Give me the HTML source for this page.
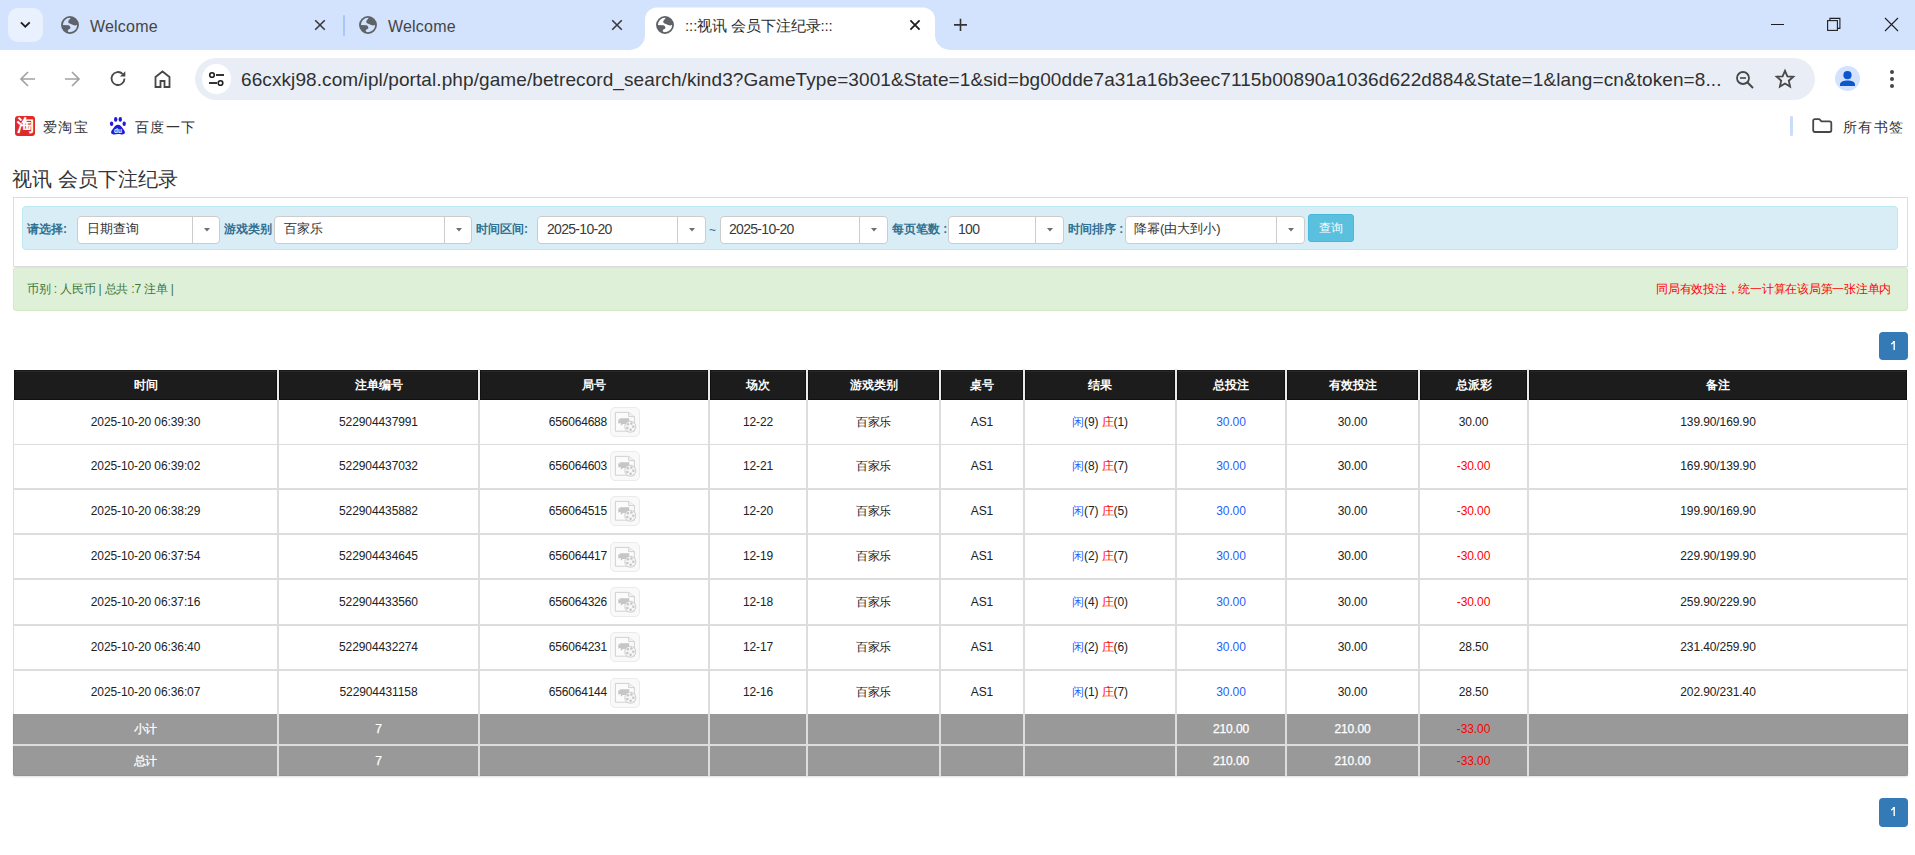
<!DOCTYPE html><html><head><meta charset="utf-8"><style>

*{box-sizing:border-box;margin:0;padding:0}
html,body{width:1915px;height:855px;overflow:hidden;background:#fff;font-family:"Liberation Sans",sans-serif;position:relative}
.abs{position:absolute}
.t{position:absolute;white-space:nowrap;line-height:1}
svg{position:absolute;overflow:visible}

</style></head><body>
<div class="abs" style="left:0;top:0;width:1915px;height:50px;background:#d3e3fd"></div>
<div class="abs" style="left:8px;top:8px;width:35px;height:34px;border-radius:10px;background:#eaf1fe"></div>
<svg style="left:19px;top:19px" width="12" height="12" viewBox="0 0 12 12"><path d="M1.9 3.3 L6.3 7.7 L10.7 3.3" fill="none" stroke="#1f1f1f" stroke-width="1.9"/></svg>
<svg style="left:61px;top:16px" width="18" height="18" viewBox="0 0 18 18"><circle cx="9" cy="9" r="8.05" fill="none" stroke="#5f6368" stroke-width="1.8"/><path d="M9.7 1.0 A8 8 0 0 1 17 9 L16.3 8.8 C15 9.6 13.5 9.7 12.2 9.1 C11 8.3 10 7.7 8.6 7.4 C7.2 7.1 6.9 5.6 7.6 4.5 C8.3 3.4 9.9 2.6 9.7 1.0 Z" fill="#5f6368"/><path d="M1 9 L7.25 9.3 C8.6 9.5 9.4 10.6 9.4 12 C9.3 12.9 8 13.1 7.2 13.7 C6.5 14.3 6.7 15.6 7.5 16.9 A8 8 0 0 1 1 9 Z" fill="#5f6368"/></svg>
<div class="t" style="left:90px;top:19px;font-size:16px;letter-spacing:0.2px;color:#454545">Welcome</div>
<svg style="left:312px;top:17px" width="16" height="16" viewBox="0 0 16 16"><path d="M3.2 3.2 L12.8 12.8 M12.8 3.2 L3.2 12.8" stroke="#3a3a3a" stroke-width="1.6"/></svg>
<div class="abs" style="left:342.5px;top:15px;width:2.6px;height:21px;background:#a8c7fa;border-radius:1.3px"></div>
<svg style="left:359px;top:16px" width="18" height="18" viewBox="0 0 18 18"><circle cx="9" cy="9" r="8.05" fill="none" stroke="#5f6368" stroke-width="1.8"/><path d="M9.7 1.0 A8 8 0 0 1 17 9 L16.3 8.8 C15 9.6 13.5 9.7 12.2 9.1 C11 8.3 10 7.7 8.6 7.4 C7.2 7.1 6.9 5.6 7.6 4.5 C8.3 3.4 9.9 2.6 9.7 1.0 Z" fill="#5f6368"/><path d="M1 9 L7.25 9.3 C8.6 9.5 9.4 10.6 9.4 12 C9.3 12.9 8 13.1 7.2 13.7 C6.5 14.3 6.7 15.6 7.5 16.9 A8 8 0 0 1 1 9 Z" fill="#5f6368"/></svg>
<div class="t" style="left:388px;top:19px;font-size:16px;letter-spacing:0.2px;color:#454545">Welcome</div>
<svg style="left:609px;top:17px" width="16" height="16" viewBox="0 0 16 16"><path d="M3.2 3.2 L12.8 12.8 M12.8 3.2 L3.2 12.8" stroke="#3a3a3a" stroke-width="1.6"/></svg>
<svg style="left:0;top:0" width="1915" height="50" viewBox="0 0 1915 50"><path d="M630 50 A15 15 0 0 0 645 35 V19.5 A12 12 0 0 1 657 7.5 H923 A12 12 0 0 1 935 19.5 V35 A15 15 0 0 0 950 50 Z" fill="#fff"/></svg>
<svg style="left:656px;top:16px" width="18" height="18" viewBox="0 0 18 18"><circle cx="9" cy="9" r="8.05" fill="none" stroke="#5f6368" stroke-width="1.8"/><path d="M9.7 1.0 A8 8 0 0 1 17 9 L16.3 8.8 C15 9.6 13.5 9.7 12.2 9.1 C11 8.3 10 7.7 8.6 7.4 C7.2 7.1 6.9 5.6 7.6 4.5 C8.3 3.4 9.9 2.6 9.7 1.0 Z" fill="#5f6368"/><path d="M1 9 L7.25 9.3 C8.6 9.5 9.4 10.6 9.4 12 C9.3 12.9 8 13.1 7.2 13.7 C6.5 14.3 6.7 15.6 7.5 16.9 A8 8 0 0 1 1 9 Z" fill="#5f6368"/></svg>
<div class="t" style="left:685px;top:18px;font-size:15px;letter-spacing:-0.1px;color:#2b2b2b">:::视讯 会员下注纪录:::</div>
<svg style="left:907px;top:17px" width="16" height="16" viewBox="0 0 16 16"><path d="M3.4000000000000004 3.4000000000000004 L12.6 12.6 M12.6 3.4000000000000004 L3.4000000000000004 12.6" stroke="#1f1f1f" stroke-width="1.8"/></svg>
<svg style="left:952px;top:17px" width="16" height="16" viewBox="0 0 16 16"><path d="M8.5 1.8 V14 M2 7.9 H15" stroke="#333" stroke-width="1.6"/></svg>
<div class="abs" style="left:1771px;top:24px;width:13px;height:1px;background:#1f1f1f"></div>
<svg style="left:1826px;top:16px" width="16" height="16" viewBox="0 0 16 16"><rect x="1.6" y="4.6" width="9.8" height="9.8" fill="none" stroke="#1f1f1f" stroke-width="1.1"/><path d="M3.9 4.6 V2.4 H13.9 V12.4 H11.4" fill="none" stroke="#1f1f1f" stroke-width="1.1"/></svg>
<svg style="left:1884px;top:17px" width="15" height="15" viewBox="0 0 15 15"><path d="M1 1 L14 14 M14 1 L1 14" stroke="#1f1f1f" stroke-width="1.1"/></svg>
<div class="abs" style="left:0;top:50px;width:1915px;height:50px;background:#fff"></div>
<svg style="left:20px;top:71px" width="16" height="16" viewBox="0 0 16 16"><path d="M15 8 H1.5 M8 1 L1 8 L8 15" fill="none" stroke="#a3a3a3" stroke-width="1.7"/></svg>
<svg style="left:64px;top:71px" width="16" height="16" viewBox="0 0 16 16"><path d="M1 8 H14.5 M8 1 L15 8 L8 15" fill="none" stroke="#a3a3a3" stroke-width="1.7"/></svg>
<svg style="left:110px;top:70px" width="17" height="17" viewBox="0 0 17 17"><path d="M14.5 8.5 A6.5 6.5 0 1 1 12.6 3.9" fill="none" stroke="#474747" stroke-width="1.8"/><path d="M15.3 1.2 V6.5 H10 Z" fill="#474747"/></svg>
<svg style="left:154px;top:70px" width="17" height="18" viewBox="0 0 17 18"><path d="M1.5 17 V7 L8.5 1.5 L15.5 7 V17 H10.5 V11 H6.5 V17 Z" fill="none" stroke="#474747" stroke-width="1.8" stroke-linejoin="miter"/></svg>
<div class="abs" style="left:195px;top:58px;width:1620px;height:42px;border-radius:21px;background:#e9eef6"></div>
<div class="abs" style="left:202px;top:64px;width:29px;height:30px;border-radius:15px;background:#fff"></div>
<svg style="left:208px;top:71px" width="17" height="16" viewBox="0 0 17 16"><circle cx="4" cy="4" r="2.3" fill="none" stroke="#1f1f1f" stroke-width="1.6"/><path d="M8 4 H16" stroke="#1f1f1f" stroke-width="1.8"/><circle cx="12.5" cy="12" r="2.3" fill="none" stroke="#1f1f1f" stroke-width="1.6"/><path d="M1 12 H9" stroke="#1f1f1f" stroke-width="1.8"/></svg>
<div class="t" style="left:241px;top:70px;font-size:19px;letter-spacing:0.09px;color:#303030">66cxkj98.com/ipl/portal.php/game/betrecord_search/kind3?GameType=3001&amp;State=1&amp;sid=bg00dde7a31a16b3eec7115b00890a1036d622d884&amp;State=1&amp;lang=cn&amp;token=8...</div>
<svg style="left:1735px;top:70px" width="20" height="20" viewBox="0 0 20 20"><circle cx="8" cy="8" r="6" fill="none" stroke="#474747" stroke-width="1.8"/><path d="M5 8 H11" stroke="#474747" stroke-width="1.6"/><path d="M12.3 12.3 L18 18" stroke="#474747" stroke-width="2"/></svg>
<svg style="left:1775px;top:69px" width="20" height="20" viewBox="0 0 20 20"><path d="M10 1.8 L12.4 7.3 L18.3 7.8 L13.8 11.7 L15.1 17.6 L10 14.5 L4.9 17.6 L6.2 11.7 L1.7 7.8 L7.6 7.3 Z" fill="none" stroke="#474747" stroke-width="1.8" stroke-linejoin="miter"/></svg>
<div class="abs" style="left:1835px;top:66px;width:25px;height:25px;border-radius:50%;background:#d3e3fd"></div>
<svg style="left:1838px;top:69px" width="19" height="19" viewBox="0 0 19 19"><circle cx="9.5" cy="6.2" r="4.1" fill="#0b57d0"/><path d="M2 17 V15.3 C2 12.6 5.5 11.4 9.5 11.4 C13.5 11.4 17 12.6 17 15.3 V17 Z" fill="#0b57d0"/></svg>
<div class="abs" style="left:1890px;top:70px;width:4px;height:4px;border-radius:50%;background:#474747"></div>
<div class="abs" style="left:1890px;top:77px;width:4px;height:4px;border-radius:50%;background:#474747"></div>
<div class="abs" style="left:1890px;top:84px;width:4px;height:4px;border-radius:50%;background:#474747"></div>
<div class="abs" style="left:15px;top:116px;width:20px;height:20px;border-radius:3px;background:#e02a2a"></div>
<div class="t" style="left:16px;top:117px;font-size:17px;color:#fff;font-weight:bold;width:18px;text-align:center;line-height:18px">淘</div>
<div class="t" style="left:43px;top:120px;font-size:14px;letter-spacing:1.4px;color:#333">爱淘宝</div>
<svg style="left:109px;top:116px" width="18" height="20" viewBox="0 0 18 20"><ellipse cx="2.6" cy="7.8" rx="1.7" ry="2.2" fill="#2319dc"/><ellipse cx="15.2" cy="7.8" rx="1.7" ry="2.2" fill="#2319dc"/><ellipse cx="6.7" cy="3.4" rx="1.7" ry="2.3" fill="#2319dc"/><ellipse cx="11.3" cy="3.4" rx="1.7" ry="2.3" fill="#2319dc"/><path d="M9 8.8 C6.5 8.8 5.5 11 4 12.8 C2.5 14.5 1.9 15.5 2.2 17 C2.6 18.3 4 18.6 5.5 18.4 C7 18.2 8 17.9 9 17.9 C10 17.9 11 18.2 12.5 18.4 C14 18.6 15.4 18.3 15.8 17 C16.1 15.5 15.5 14.5 14 12.8 C12.5 11 11.5 8.8 9 8.8Z" fill="#2319dc"/><text x="9" y="17" font-size="6.5" fill="#fff" text-anchor="middle" font-family="Liberation Sans" font-weight="bold">du</text></svg>
<div class="t" style="left:135px;top:120px;font-size:14px;letter-spacing:1.4px;color:#333">百度一下</div>
<div class="abs" style="left:1790.2px;top:116px;width:2.6px;height:19.5px;border-radius:1.3px;background:#cadcfb"></div>
<svg style="left:1811px;top:117px" width="22" height="17" viewBox="0 0 22 17"><path d="M3.9 2.1 H8.3 L10.5 4.4 H18.6 Q20.3 4.4 20.3 6.1 V13.3 Q20.3 15 18.6 15 H3.9 Q2.2 15 2.2 13.3 V3.8 Q2.2 2.1 3.9 2.1 Z" fill="none" stroke="#474747" stroke-width="1.8" stroke-linejoin="round"/></svg>
<div class="t" style="left:1843px;top:120px;font-size:14px;letter-spacing:1.3px;color:#333">所有书签</div>
<div class="t" style="left:12px;top:169px;font-size:20px;color:#333">视讯 会员下注纪录</div>
<div class="abs" style="left:13px;top:197px;width:1895px;height:70px;border:1px solid #ddd;background:#fff"></div>
<div class="abs" style="left:22px;top:206px;width:1876px;height:44px;border:1px solid #bce8f1;border-radius:4px;background:#d9edf7"></div>
<div class="t" style="left:27px;top:223px;font-size:12px;font-weight:bold;color:#31708f">请选择:</div>
<div class="abs" style="left:77px;top:216px;width:143px;height:28px;border:1px solid #ccc;border-radius:4px;background:#fff"></div>
<div class="abs" style="left:192px;top:217px;width:1px;height:26px;background:#ccc"></div>
<svg style="left:203.5px;top:228px" width="6" height="4" viewBox="0 0 6 4"><path d="M0 0 H6 L3 3.6Z" fill="#6f6f6f"/></svg>
<div class="t" style="left:87px;top:222px;font-size:13px;color:#333">日期查询</div>
<div class="t" style="left:224px;top:223px;font-size:12px;font-weight:bold;color:#31708f">游戏类别</div>
<div class="abs" style="left:274px;top:216px;width:198px;height:28px;border:1px solid #ccc;border-radius:4px;background:#fff"></div>
<div class="abs" style="left:444px;top:217px;width:1px;height:26px;background:#ccc"></div>
<svg style="left:455.5px;top:228px" width="6" height="4" viewBox="0 0 6 4"><path d="M0 0 H6 L3 3.6Z" fill="#6f6f6f"/></svg>
<div class="t" style="left:284px;top:222px;font-size:13px;color:#333">百家乐</div>
<div class="t" style="left:476px;top:223px;font-size:12px;font-weight:bold;color:#31708f">时间区间:</div>
<div class="abs" style="left:537px;top:216px;width:169px;height:28px;border:1px solid #ccc;border-radius:4px;background:#fff"></div>
<div class="abs" style="left:677px;top:217px;width:1px;height:26px;background:#ccc"></div>
<svg style="left:689.0px;top:228px" width="6" height="4" viewBox="0 0 6 4"><path d="M0 0 H6 L3 3.6Z" fill="#6f6f6f"/></svg>
<div class="t" style="left:547px;top:222px;font-size:14px;letter-spacing:-0.7px;color:#3a3a3a">2025-10-20</div>
<div class="t" style="left:709px;top:224px;font-size:12px;color:#31708f">~</div>
<div class="abs" style="left:720px;top:216px;width:168px;height:28px;border:1px solid #ccc;border-radius:4px;background:#fff"></div>
<div class="abs" style="left:859px;top:217px;width:1px;height:26px;background:#ccc"></div>
<svg style="left:871.0px;top:228px" width="6" height="4" viewBox="0 0 6 4"><path d="M0 0 H6 L3 3.6Z" fill="#6f6f6f"/></svg>
<div class="t" style="left:729px;top:222px;font-size:14px;letter-spacing:-0.7px;color:#3a3a3a">2025-10-20</div>
<div class="t" style="left:892px;top:223px;font-size:12px;font-weight:bold;color:#31708f">每页笔数 :</div>
<div class="abs" style="left:948px;top:216px;width:116px;height:28px;border:1px solid #ccc;border-radius:4px;background:#fff"></div>
<div class="abs" style="left:1035px;top:217px;width:1px;height:26px;background:#ccc"></div>
<svg style="left:1047.0px;top:228px" width="6" height="4" viewBox="0 0 6 4"><path d="M0 0 H6 L3 3.6Z" fill="#6f6f6f"/></svg>
<div class="t" style="left:958px;top:222px;font-size:14px;letter-spacing:-0.7px;color:#3a3a3a">100</div>
<div class="t" style="left:1068px;top:223px;font-size:12px;font-weight:bold;color:#31708f">时间排序 :</div>
<div class="abs" style="left:1125px;top:216px;width:180px;height:28px;border:1px solid #ccc;border-radius:4px;background:#fff"></div>
<div class="abs" style="left:1276px;top:217px;width:1px;height:26px;background:#ccc"></div>
<svg style="left:1288.0px;top:228px" width="6" height="4" viewBox="0 0 6 4"><path d="M0 0 H6 L3 3.6Z" fill="#6f6f6f"/></svg>
<div class="t" style="left:1134px;top:222px;font-size:13px;color:#333">降幂(由大到小)</div>
<div class="abs" style="left:1308px;top:214px;width:46px;height:28px;border-radius:3px;background:#5bc0de;border:1px solid #46b8da"></div>
<div class="t" style="left:1319px;top:222px;font-size:12px;color:#fff">查询</div>
<div class="abs" style="left:13px;top:267px;width:1895px;height:44px;border:1px solid #d6e9c6;border-radius:3px;background:#dff0d8"></div>
<div class="t" style="left:27px;top:283px;font-size:12px;letter-spacing:-0.2px;color:#3c763d">币别 : 人民币 | 总共 :7 注单 |</div>
<div class="t" style="right:24px;top:283px;font-size:12px;letter-spacing:-0.26px;color:#f00">同局有效投注，统一计算在该局第一张注单内</div>
<div class="abs" style="left:1879px;top:332px;width:29px;height:28px;border-radius:4px;background:#337ab7"></div>
<svg style="left:1886px;top:338px" width="15" height="15" viewBox="0 0 15 15"><path d="M5.2 6 Q7 5.3 7.6 3.7 H8.2 V12" fill="none" stroke="#fff" stroke-width="1.4"/></svg>
<div class="abs" style="left:1879px;top:798px;width:29px;height:29px;border-radius:4px;background:#337ab7"></div>
<svg style="left:1886px;top:804px" width="15" height="15" viewBox="0 0 15 15"><path d="M5.2 6 Q7 5.3 7.6 3.7 H8.2 V12" fill="none" stroke="#fff" stroke-width="1.4"/></svg>
<div class="abs" style="left:14px;top:370px;width:1893px;height:30px;background:#1c1c1c"></div>
<div class="abs" style="left:14px;top:370px;width:1893px;height:1px;background:#1a1a1a"></div>
<div class="abs" style="left:14px;top:371px;width:1893px;height:1px;background:#282828"></div>
<div class="abs" style="left:14px;top:370px;width:1px;height:30px;background:#111"></div>
<div class="abs" style="left:1906px;top:370px;width:1px;height:30px;background:#111"></div>
<div class="abs" style="left:14px;top:399px;width:1893px;height:1px;background:#111"></div>
<div class="t" style="left:14px;top:379px;width:263px;text-align:center;font-size:12px;font-weight:bold;color:#fff">时间</div>
<div class="t" style="left:279px;top:379px;width:199px;text-align:center;font-size:12px;font-weight:bold;color:#fff">注单编号</div>
<div class="t" style="left:480px;top:379px;width:228px;text-align:center;font-size:12px;font-weight:bold;color:#fff">局号</div>
<div class="t" style="left:710px;top:379px;width:96px;text-align:center;font-size:12px;font-weight:bold;color:#fff">场次</div>
<div class="t" style="left:808px;top:379px;width:131px;text-align:center;font-size:12px;font-weight:bold;color:#fff">游戏类别</div>
<div class="t" style="left:941px;top:379px;width:82px;text-align:center;font-size:12px;font-weight:bold;color:#fff">桌号</div>
<div class="t" style="left:1025px;top:379px;width:150px;text-align:center;font-size:12px;font-weight:bold;color:#fff">结果</div>
<div class="t" style="left:1177px;top:379px;width:108px;text-align:center;font-size:12px;font-weight:bold;color:#fff">总投注</div>
<div class="t" style="left:1287px;top:379px;width:131px;text-align:center;font-size:12px;font-weight:bold;color:#fff">有效投注</div>
<div class="t" style="left:1420px;top:379px;width:107px;text-align:center;font-size:12px;font-weight:bold;color:#fff">总派彩</div>
<div class="t" style="left:1529px;top:379px;width:378px;text-align:center;font-size:12px;font-weight:bold;color:#fff">备注</div>
<div class="abs" style="left:13px;top:400px;width:1px;height:314px;background:#ddd"></div>
<div class="abs" style="left:1907px;top:400px;width:1px;height:314px;background:#ddd"></div>
<div class="abs" style="left:14px;top:444px;width:1893px;height:1px;background:#ddd"></div>
<div class="abs" style="left:14px;top:488px;width:1893px;height:2px;background:#ddd"></div>
<div class="abs" style="left:14px;top:533px;width:1893px;height:2px;background:#ddd"></div>
<div class="abs" style="left:14px;top:578px;width:1893px;height:2px;background:#ddd"></div>
<div class="abs" style="left:14px;top:624px;width:1893px;height:2px;background:#ddd"></div>
<div class="abs" style="left:14px;top:669px;width:1893px;height:2px;background:#ddd"></div>
<div class="abs" style="left:277px;top:400px;width:2px;height:376px;background:#ddd"></div>
<div class="abs" style="left:277px;top:369px;width:2px;height:31px;background:#ebebeb"></div>
<div class="abs" style="left:276px;top:370px;width:1px;height:30px;background:#111"></div>
<div class="abs" style="left:279px;top:370px;width:1px;height:30px;background:#111"></div>
<div class="abs" style="left:478px;top:400px;width:2px;height:376px;background:#ddd"></div>
<div class="abs" style="left:478px;top:369px;width:2px;height:31px;background:#ebebeb"></div>
<div class="abs" style="left:477px;top:370px;width:1px;height:30px;background:#111"></div>
<div class="abs" style="left:480px;top:370px;width:1px;height:30px;background:#111"></div>
<div class="abs" style="left:708px;top:400px;width:2px;height:376px;background:#ddd"></div>
<div class="abs" style="left:708px;top:369px;width:2px;height:31px;background:#ebebeb"></div>
<div class="abs" style="left:707px;top:370px;width:1px;height:30px;background:#111"></div>
<div class="abs" style="left:710px;top:370px;width:1px;height:30px;background:#111"></div>
<div class="abs" style="left:806px;top:400px;width:2px;height:376px;background:#ddd"></div>
<div class="abs" style="left:806px;top:369px;width:2px;height:31px;background:#ebebeb"></div>
<div class="abs" style="left:805px;top:370px;width:1px;height:30px;background:#111"></div>
<div class="abs" style="left:808px;top:370px;width:1px;height:30px;background:#111"></div>
<div class="abs" style="left:939px;top:400px;width:2px;height:376px;background:#ddd"></div>
<div class="abs" style="left:939px;top:369px;width:2px;height:31px;background:#ebebeb"></div>
<div class="abs" style="left:938px;top:370px;width:1px;height:30px;background:#111"></div>
<div class="abs" style="left:941px;top:370px;width:1px;height:30px;background:#111"></div>
<div class="abs" style="left:1023px;top:400px;width:2px;height:376px;background:#ddd"></div>
<div class="abs" style="left:1023px;top:369px;width:2px;height:31px;background:#ebebeb"></div>
<div class="abs" style="left:1022px;top:370px;width:1px;height:30px;background:#111"></div>
<div class="abs" style="left:1025px;top:370px;width:1px;height:30px;background:#111"></div>
<div class="abs" style="left:1175px;top:400px;width:2px;height:376px;background:#ddd"></div>
<div class="abs" style="left:1175px;top:369px;width:2px;height:31px;background:#ebebeb"></div>
<div class="abs" style="left:1174px;top:370px;width:1px;height:30px;background:#111"></div>
<div class="abs" style="left:1177px;top:370px;width:1px;height:30px;background:#111"></div>
<div class="abs" style="left:1285px;top:400px;width:2px;height:376px;background:#ddd"></div>
<div class="abs" style="left:1285px;top:369px;width:2px;height:31px;background:#ebebeb"></div>
<div class="abs" style="left:1284px;top:370px;width:1px;height:30px;background:#111"></div>
<div class="abs" style="left:1287px;top:370px;width:1px;height:30px;background:#111"></div>
<div class="abs" style="left:1418px;top:400px;width:2px;height:376px;background:#ddd"></div>
<div class="abs" style="left:1418px;top:369px;width:2px;height:31px;background:#ebebeb"></div>
<div class="abs" style="left:1417px;top:370px;width:1px;height:30px;background:#111"></div>
<div class="abs" style="left:1420px;top:370px;width:1px;height:30px;background:#111"></div>
<div class="abs" style="left:1527px;top:400px;width:2px;height:376px;background:#ddd"></div>
<div class="abs" style="left:1527px;top:369px;width:2px;height:31px;background:#ebebeb"></div>
<div class="abs" style="left:1526px;top:370px;width:1px;height:30px;background:#111"></div>
<div class="abs" style="left:1529px;top:370px;width:1px;height:30px;background:#111"></div>
<div class="t" style="left:14px;top:416px;width:263px;text-align:center;font-size:12px;letter-spacing:-0.1px;color:#222">2025-10-20 06:39:30</div>
<div class="t" style="left:279px;top:416px;width:199px;text-align:center;font-size:12px;letter-spacing:-0.1px;color:#222">522904437991</div>
<div class="t" style="left:480px;top:416px;width:128px;text-align:left;padding-left:68.79999999999995px;font-size:12px;color:#222;letter-spacing:-0.2px">656064688</div>
<svg style="left:610px;top:407px" width="30" height="30" viewBox="0 0 30 30"><rect x="0.5" y="0.5" width="29" height="29" rx="4.5" fill="#f9f9f9" stroke="#ebebeb"/><path d="M5.4 5.4 H18.7 L24.4 9.6 V24.2 H5.4 Z" fill="#fbfbfb" stroke="#cdcdcd" stroke-width="0.9"/><path d="M18.7 5.4 V9.6 H24.4" fill="#f2f2f2" stroke="#cdcdcd" stroke-width="0.9"/><path d="M8.3 12.2 L9.8 12.6 V11.2 H19.2 V17.1 H12.5 L12.2 18.2 L10.8 18.2 V16 L8.3 16.6 Z" fill="#c6c6c6"/><circle cx="20.3" cy="19.7" r="5.5" fill="#f6f6f6" stroke="#c8c8c8" stroke-width="0.9"/><circle cx="17.9" cy="17.3" r="1.25" fill="#c6c6c6"/><circle cx="21.4" cy="16.6" r="1.25" fill="#c6c6c6"/><circle cx="23.3" cy="19.8" r="1.25" fill="#c6c6c6"/><circle cx="20.6" cy="22.7" r="1.25" fill="#c6c6c6"/><circle cx="17.3" cy="21" r="1.25" fill="#c6c6c6"/></svg>
<div class="t" style="left:710px;top:416px;width:96px;text-align:center;font-size:12px;letter-spacing:-0.1px;color:#222">12-22</div>
<div class="t" style="left:808px;top:416px;width:131px;text-align:center;font-size:12px;letter-spacing:-0.1px;color:#222">百家乐</div>
<div class="t" style="left:941px;top:416px;width:82px;text-align:center;font-size:12px;letter-spacing:-0.1px;color:#222">AS1</div>
<div class="t" style="left:1025px;top:416px;width:150px;text-align:center;font-size:12px;letter-spacing:-0.1px;color:#222"><span style="color:#1f5fff">闲</span>(9) <span style="color:#f00">庄</span>(1)</div>
<div class="t" style="left:1177px;top:416px;width:108px;text-align:center;font-size:12px;letter-spacing:-0.1px;color:#1f5fff">30.00</div>
<div class="t" style="left:1287px;top:416px;width:131px;text-align:center;font-size:12px;letter-spacing:-0.1px;color:#222">30.00</div>
<div class="t" style="left:1420px;top:416px;width:107px;text-align:center;font-size:12px;letter-spacing:-0.1px;color:#222">30.00</div>
<div class="t" style="left:1529px;top:416px;width:378px;text-align:center;font-size:12px;letter-spacing:-0.1px;color:#222">139.90/169.90</div>
<div class="t" style="left:14px;top:460px;width:263px;text-align:center;font-size:12px;letter-spacing:-0.1px;color:#222">2025-10-20 06:39:02</div>
<div class="t" style="left:279px;top:460px;width:199px;text-align:center;font-size:12px;letter-spacing:-0.1px;color:#222">522904437032</div>
<div class="t" style="left:480px;top:460px;width:128px;text-align:left;padding-left:68.79999999999995px;font-size:12px;color:#222;letter-spacing:-0.2px">656064603</div>
<svg style="left:610px;top:451px" width="30" height="30" viewBox="0 0 30 30"><rect x="0.5" y="0.5" width="29" height="29" rx="4.5" fill="#f9f9f9" stroke="#ebebeb"/><path d="M5.4 5.4 H18.7 L24.4 9.6 V24.2 H5.4 Z" fill="#fbfbfb" stroke="#cdcdcd" stroke-width="0.9"/><path d="M18.7 5.4 V9.6 H24.4" fill="#f2f2f2" stroke="#cdcdcd" stroke-width="0.9"/><path d="M8.3 12.2 L9.8 12.6 V11.2 H19.2 V17.1 H12.5 L12.2 18.2 L10.8 18.2 V16 L8.3 16.6 Z" fill="#c6c6c6"/><circle cx="20.3" cy="19.7" r="5.5" fill="#f6f6f6" stroke="#c8c8c8" stroke-width="0.9"/><circle cx="17.9" cy="17.3" r="1.25" fill="#c6c6c6"/><circle cx="21.4" cy="16.6" r="1.25" fill="#c6c6c6"/><circle cx="23.3" cy="19.8" r="1.25" fill="#c6c6c6"/><circle cx="20.6" cy="22.7" r="1.25" fill="#c6c6c6"/><circle cx="17.3" cy="21" r="1.25" fill="#c6c6c6"/></svg>
<div class="t" style="left:710px;top:460px;width:96px;text-align:center;font-size:12px;letter-spacing:-0.1px;color:#222">12-21</div>
<div class="t" style="left:808px;top:460px;width:131px;text-align:center;font-size:12px;letter-spacing:-0.1px;color:#222">百家乐</div>
<div class="t" style="left:941px;top:460px;width:82px;text-align:center;font-size:12px;letter-spacing:-0.1px;color:#222">AS1</div>
<div class="t" style="left:1025px;top:460px;width:150px;text-align:center;font-size:12px;letter-spacing:-0.1px;color:#222"><span style="color:#1f5fff">闲</span>(8) <span style="color:#f00">庄</span>(7)</div>
<div class="t" style="left:1177px;top:460px;width:108px;text-align:center;font-size:12px;letter-spacing:-0.1px;color:#1f5fff">30.00</div>
<div class="t" style="left:1287px;top:460px;width:131px;text-align:center;font-size:12px;letter-spacing:-0.1px;color:#222">30.00</div>
<div class="t" style="left:1420px;top:460px;width:107px;text-align:center;font-size:12px;letter-spacing:-0.1px;color:#f00">-30.00</div>
<div class="t" style="left:1529px;top:460px;width:378px;text-align:center;font-size:12px;letter-spacing:-0.1px;color:#222">169.90/139.90</div>
<div class="t" style="left:14px;top:505px;width:263px;text-align:center;font-size:12px;letter-spacing:-0.1px;color:#222">2025-10-20 06:38:29</div>
<div class="t" style="left:279px;top:505px;width:199px;text-align:center;font-size:12px;letter-spacing:-0.1px;color:#222">522904435882</div>
<div class="t" style="left:480px;top:505px;width:128px;text-align:left;padding-left:68.79999999999995px;font-size:12px;color:#222;letter-spacing:-0.2px">656064515</div>
<svg style="left:610px;top:496px" width="30" height="30" viewBox="0 0 30 30"><rect x="0.5" y="0.5" width="29" height="29" rx="4.5" fill="#f9f9f9" stroke="#ebebeb"/><path d="M5.4 5.4 H18.7 L24.4 9.6 V24.2 H5.4 Z" fill="#fbfbfb" stroke="#cdcdcd" stroke-width="0.9"/><path d="M18.7 5.4 V9.6 H24.4" fill="#f2f2f2" stroke="#cdcdcd" stroke-width="0.9"/><path d="M8.3 12.2 L9.8 12.6 V11.2 H19.2 V17.1 H12.5 L12.2 18.2 L10.8 18.2 V16 L8.3 16.6 Z" fill="#c6c6c6"/><circle cx="20.3" cy="19.7" r="5.5" fill="#f6f6f6" stroke="#c8c8c8" stroke-width="0.9"/><circle cx="17.9" cy="17.3" r="1.25" fill="#c6c6c6"/><circle cx="21.4" cy="16.6" r="1.25" fill="#c6c6c6"/><circle cx="23.3" cy="19.8" r="1.25" fill="#c6c6c6"/><circle cx="20.6" cy="22.7" r="1.25" fill="#c6c6c6"/><circle cx="17.3" cy="21" r="1.25" fill="#c6c6c6"/></svg>
<div class="t" style="left:710px;top:505px;width:96px;text-align:center;font-size:12px;letter-spacing:-0.1px;color:#222">12-20</div>
<div class="t" style="left:808px;top:505px;width:131px;text-align:center;font-size:12px;letter-spacing:-0.1px;color:#222">百家乐</div>
<div class="t" style="left:941px;top:505px;width:82px;text-align:center;font-size:12px;letter-spacing:-0.1px;color:#222">AS1</div>
<div class="t" style="left:1025px;top:505px;width:150px;text-align:center;font-size:12px;letter-spacing:-0.1px;color:#222"><span style="color:#1f5fff">闲</span>(7) <span style="color:#f00">庄</span>(5)</div>
<div class="t" style="left:1177px;top:505px;width:108px;text-align:center;font-size:12px;letter-spacing:-0.1px;color:#1f5fff">30.00</div>
<div class="t" style="left:1287px;top:505px;width:131px;text-align:center;font-size:12px;letter-spacing:-0.1px;color:#222">30.00</div>
<div class="t" style="left:1420px;top:505px;width:107px;text-align:center;font-size:12px;letter-spacing:-0.1px;color:#f00">-30.00</div>
<div class="t" style="left:1529px;top:505px;width:378px;text-align:center;font-size:12px;letter-spacing:-0.1px;color:#222">199.90/169.90</div>
<div class="t" style="left:14px;top:550px;width:263px;text-align:center;font-size:12px;letter-spacing:-0.1px;color:#222">2025-10-20 06:37:54</div>
<div class="t" style="left:279px;top:550px;width:199px;text-align:center;font-size:12px;letter-spacing:-0.1px;color:#222">522904434645</div>
<div class="t" style="left:480px;top:550px;width:128px;text-align:left;padding-left:68.79999999999995px;font-size:12px;color:#222;letter-spacing:-0.2px">656064417</div>
<svg style="left:610px;top:542px" width="30" height="30" viewBox="0 0 30 30"><rect x="0.5" y="0.5" width="29" height="29" rx="4.5" fill="#f9f9f9" stroke="#ebebeb"/><path d="M5.4 5.4 H18.7 L24.4 9.6 V24.2 H5.4 Z" fill="#fbfbfb" stroke="#cdcdcd" stroke-width="0.9"/><path d="M18.7 5.4 V9.6 H24.4" fill="#f2f2f2" stroke="#cdcdcd" stroke-width="0.9"/><path d="M8.3 12.2 L9.8 12.6 V11.2 H19.2 V17.1 H12.5 L12.2 18.2 L10.8 18.2 V16 L8.3 16.6 Z" fill="#c6c6c6"/><circle cx="20.3" cy="19.7" r="5.5" fill="#f6f6f6" stroke="#c8c8c8" stroke-width="0.9"/><circle cx="17.9" cy="17.3" r="1.25" fill="#c6c6c6"/><circle cx="21.4" cy="16.6" r="1.25" fill="#c6c6c6"/><circle cx="23.3" cy="19.8" r="1.25" fill="#c6c6c6"/><circle cx="20.6" cy="22.7" r="1.25" fill="#c6c6c6"/><circle cx="17.3" cy="21" r="1.25" fill="#c6c6c6"/></svg>
<div class="t" style="left:710px;top:550px;width:96px;text-align:center;font-size:12px;letter-spacing:-0.1px;color:#222">12-19</div>
<div class="t" style="left:808px;top:550px;width:131px;text-align:center;font-size:12px;letter-spacing:-0.1px;color:#222">百家乐</div>
<div class="t" style="left:941px;top:550px;width:82px;text-align:center;font-size:12px;letter-spacing:-0.1px;color:#222">AS1</div>
<div class="t" style="left:1025px;top:550px;width:150px;text-align:center;font-size:12px;letter-spacing:-0.1px;color:#222"><span style="color:#1f5fff">闲</span>(2) <span style="color:#f00">庄</span>(7)</div>
<div class="t" style="left:1177px;top:550px;width:108px;text-align:center;font-size:12px;letter-spacing:-0.1px;color:#1f5fff">30.00</div>
<div class="t" style="left:1287px;top:550px;width:131px;text-align:center;font-size:12px;letter-spacing:-0.1px;color:#222">30.00</div>
<div class="t" style="left:1420px;top:550px;width:107px;text-align:center;font-size:12px;letter-spacing:-0.1px;color:#f00">-30.00</div>
<div class="t" style="left:1529px;top:550px;width:378px;text-align:center;font-size:12px;letter-spacing:-0.1px;color:#222">229.90/199.90</div>
<div class="t" style="left:14px;top:596px;width:263px;text-align:center;font-size:12px;letter-spacing:-0.1px;color:#222">2025-10-20 06:37:16</div>
<div class="t" style="left:279px;top:596px;width:199px;text-align:center;font-size:12px;letter-spacing:-0.1px;color:#222">522904433560</div>
<div class="t" style="left:480px;top:596px;width:128px;text-align:left;padding-left:68.79999999999995px;font-size:12px;color:#222;letter-spacing:-0.2px">656064326</div>
<svg style="left:610px;top:587px" width="30" height="30" viewBox="0 0 30 30"><rect x="0.5" y="0.5" width="29" height="29" rx="4.5" fill="#f9f9f9" stroke="#ebebeb"/><path d="M5.4 5.4 H18.7 L24.4 9.6 V24.2 H5.4 Z" fill="#fbfbfb" stroke="#cdcdcd" stroke-width="0.9"/><path d="M18.7 5.4 V9.6 H24.4" fill="#f2f2f2" stroke="#cdcdcd" stroke-width="0.9"/><path d="M8.3 12.2 L9.8 12.6 V11.2 H19.2 V17.1 H12.5 L12.2 18.2 L10.8 18.2 V16 L8.3 16.6 Z" fill="#c6c6c6"/><circle cx="20.3" cy="19.7" r="5.5" fill="#f6f6f6" stroke="#c8c8c8" stroke-width="0.9"/><circle cx="17.9" cy="17.3" r="1.25" fill="#c6c6c6"/><circle cx="21.4" cy="16.6" r="1.25" fill="#c6c6c6"/><circle cx="23.3" cy="19.8" r="1.25" fill="#c6c6c6"/><circle cx="20.6" cy="22.7" r="1.25" fill="#c6c6c6"/><circle cx="17.3" cy="21" r="1.25" fill="#c6c6c6"/></svg>
<div class="t" style="left:710px;top:596px;width:96px;text-align:center;font-size:12px;letter-spacing:-0.1px;color:#222">12-18</div>
<div class="t" style="left:808px;top:596px;width:131px;text-align:center;font-size:12px;letter-spacing:-0.1px;color:#222">百家乐</div>
<div class="t" style="left:941px;top:596px;width:82px;text-align:center;font-size:12px;letter-spacing:-0.1px;color:#222">AS1</div>
<div class="t" style="left:1025px;top:596px;width:150px;text-align:center;font-size:12px;letter-spacing:-0.1px;color:#222"><span style="color:#1f5fff">闲</span>(4) <span style="color:#f00">庄</span>(0)</div>
<div class="t" style="left:1177px;top:596px;width:108px;text-align:center;font-size:12px;letter-spacing:-0.1px;color:#1f5fff">30.00</div>
<div class="t" style="left:1287px;top:596px;width:131px;text-align:center;font-size:12px;letter-spacing:-0.1px;color:#222">30.00</div>
<div class="t" style="left:1420px;top:596px;width:107px;text-align:center;font-size:12px;letter-spacing:-0.1px;color:#f00">-30.00</div>
<div class="t" style="left:1529px;top:596px;width:378px;text-align:center;font-size:12px;letter-spacing:-0.1px;color:#222">259.90/229.90</div>
<div class="t" style="left:14px;top:641px;width:263px;text-align:center;font-size:12px;letter-spacing:-0.1px;color:#222">2025-10-20 06:36:40</div>
<div class="t" style="left:279px;top:641px;width:199px;text-align:center;font-size:12px;letter-spacing:-0.1px;color:#222">522904432274</div>
<div class="t" style="left:480px;top:641px;width:128px;text-align:left;padding-left:68.79999999999995px;font-size:12px;color:#222;letter-spacing:-0.2px">656064231</div>
<svg style="left:610px;top:632px" width="30" height="30" viewBox="0 0 30 30"><rect x="0.5" y="0.5" width="29" height="29" rx="4.5" fill="#f9f9f9" stroke="#ebebeb"/><path d="M5.4 5.4 H18.7 L24.4 9.6 V24.2 H5.4 Z" fill="#fbfbfb" stroke="#cdcdcd" stroke-width="0.9"/><path d="M18.7 5.4 V9.6 H24.4" fill="#f2f2f2" stroke="#cdcdcd" stroke-width="0.9"/><path d="M8.3 12.2 L9.8 12.6 V11.2 H19.2 V17.1 H12.5 L12.2 18.2 L10.8 18.2 V16 L8.3 16.6 Z" fill="#c6c6c6"/><circle cx="20.3" cy="19.7" r="5.5" fill="#f6f6f6" stroke="#c8c8c8" stroke-width="0.9"/><circle cx="17.9" cy="17.3" r="1.25" fill="#c6c6c6"/><circle cx="21.4" cy="16.6" r="1.25" fill="#c6c6c6"/><circle cx="23.3" cy="19.8" r="1.25" fill="#c6c6c6"/><circle cx="20.6" cy="22.7" r="1.25" fill="#c6c6c6"/><circle cx="17.3" cy="21" r="1.25" fill="#c6c6c6"/></svg>
<div class="t" style="left:710px;top:641px;width:96px;text-align:center;font-size:12px;letter-spacing:-0.1px;color:#222">12-17</div>
<div class="t" style="left:808px;top:641px;width:131px;text-align:center;font-size:12px;letter-spacing:-0.1px;color:#222">百家乐</div>
<div class="t" style="left:941px;top:641px;width:82px;text-align:center;font-size:12px;letter-spacing:-0.1px;color:#222">AS1</div>
<div class="t" style="left:1025px;top:641px;width:150px;text-align:center;font-size:12px;letter-spacing:-0.1px;color:#222"><span style="color:#1f5fff">闲</span>(2) <span style="color:#f00">庄</span>(6)</div>
<div class="t" style="left:1177px;top:641px;width:108px;text-align:center;font-size:12px;letter-spacing:-0.1px;color:#1f5fff">30.00</div>
<div class="t" style="left:1287px;top:641px;width:131px;text-align:center;font-size:12px;letter-spacing:-0.1px;color:#222">30.00</div>
<div class="t" style="left:1420px;top:641px;width:107px;text-align:center;font-size:12px;letter-spacing:-0.1px;color:#222">28.50</div>
<div class="t" style="left:1529px;top:641px;width:378px;text-align:center;font-size:12px;letter-spacing:-0.1px;color:#222">231.40/259.90</div>
<div class="t" style="left:14px;top:686px;width:263px;text-align:center;font-size:12px;letter-spacing:-0.1px;color:#222">2025-10-20 06:36:07</div>
<div class="t" style="left:279px;top:686px;width:199px;text-align:center;font-size:12px;letter-spacing:-0.1px;color:#222">522904431158</div>
<div class="t" style="left:480px;top:686px;width:128px;text-align:left;padding-left:68.79999999999995px;font-size:12px;color:#222;letter-spacing:-0.2px">656064144</div>
<svg style="left:610px;top:678px" width="30" height="30" viewBox="0 0 30 30"><rect x="0.5" y="0.5" width="29" height="29" rx="4.5" fill="#f9f9f9" stroke="#ebebeb"/><path d="M5.4 5.4 H18.7 L24.4 9.6 V24.2 H5.4 Z" fill="#fbfbfb" stroke="#cdcdcd" stroke-width="0.9"/><path d="M18.7 5.4 V9.6 H24.4" fill="#f2f2f2" stroke="#cdcdcd" stroke-width="0.9"/><path d="M8.3 12.2 L9.8 12.6 V11.2 H19.2 V17.1 H12.5 L12.2 18.2 L10.8 18.2 V16 L8.3 16.6 Z" fill="#c6c6c6"/><circle cx="20.3" cy="19.7" r="5.5" fill="#f6f6f6" stroke="#c8c8c8" stroke-width="0.9"/><circle cx="17.9" cy="17.3" r="1.25" fill="#c6c6c6"/><circle cx="21.4" cy="16.6" r="1.25" fill="#c6c6c6"/><circle cx="23.3" cy="19.8" r="1.25" fill="#c6c6c6"/><circle cx="20.6" cy="22.7" r="1.25" fill="#c6c6c6"/><circle cx="17.3" cy="21" r="1.25" fill="#c6c6c6"/></svg>
<div class="t" style="left:710px;top:686px;width:96px;text-align:center;font-size:12px;letter-spacing:-0.1px;color:#222">12-16</div>
<div class="t" style="left:808px;top:686px;width:131px;text-align:center;font-size:12px;letter-spacing:-0.1px;color:#222">百家乐</div>
<div class="t" style="left:941px;top:686px;width:82px;text-align:center;font-size:12px;letter-spacing:-0.1px;color:#222">AS1</div>
<div class="t" style="left:1025px;top:686px;width:150px;text-align:center;font-size:12px;letter-spacing:-0.1px;color:#222"><span style="color:#1f5fff">闲</span>(1) <span style="color:#f00">庄</span>(7)</div>
<div class="t" style="left:1177px;top:686px;width:108px;text-align:center;font-size:12px;letter-spacing:-0.1px;color:#1f5fff">30.00</div>
<div class="t" style="left:1287px;top:686px;width:131px;text-align:center;font-size:12px;letter-spacing:-0.1px;color:#222">30.00</div>
<div class="t" style="left:1420px;top:686px;width:107px;text-align:center;font-size:12px;letter-spacing:-0.1px;color:#222">28.50</div>
<div class="t" style="left:1529px;top:686px;width:378px;text-align:center;font-size:12px;letter-spacing:-0.1px;color:#222">202.90/231.40</div>
<div class="abs" style="left:13px;top:714px;width:1895px;height:62px;background:#999;border:1px solid #929292;border-top:0;border-radius:0 0 2px 2px;box-shadow:0 1px 2px rgba(0,0,0,0.12)"></div>
<div class="abs" style="left:13px;top:744px;width:1895px;height:2px;background:#ddd"></div>
<div class="abs" style="left:277px;top:714px;width:2px;height:62px;background:#ddd"></div>
<div class="abs" style="left:478px;top:714px;width:2px;height:62px;background:#ddd"></div>
<div class="abs" style="left:708px;top:714px;width:2px;height:62px;background:#ddd"></div>
<div class="abs" style="left:806px;top:714px;width:2px;height:62px;background:#ddd"></div>
<div class="abs" style="left:939px;top:714px;width:2px;height:62px;background:#ddd"></div>
<div class="abs" style="left:1023px;top:714px;width:2px;height:62px;background:#ddd"></div>
<div class="abs" style="left:1175px;top:714px;width:2px;height:62px;background:#ddd"></div>
<div class="abs" style="left:1285px;top:714px;width:2px;height:62px;background:#ddd"></div>
<div class="abs" style="left:1418px;top:714px;width:2px;height:62px;background:#ddd"></div>
<div class="abs" style="left:1527px;top:714px;width:2px;height:62px;background:#ddd"></div>
<div class="t" style="left:14px;top:723px;width:263px;text-align:center;font-size:12px;letter-spacing:-0.1px;-webkit-text-stroke:0.25px #fff;color:#fff">小计</div>
<div class="t" style="left:279px;top:723px;width:199px;text-align:center;font-size:12px;letter-spacing:-0.1px;-webkit-text-stroke:0.25px #fff;color:#fff">7</div>
<div class="t" style="left:1177px;top:723px;width:108px;text-align:center;font-size:12px;letter-spacing:-0.1px;-webkit-text-stroke:0.25px #fff;color:#fff">210.00</div>
<div class="t" style="left:1287px;top:723px;width:131px;text-align:center;font-size:12px;letter-spacing:-0.1px;-webkit-text-stroke:0.25px #fff;color:#fff">210.00</div>
<div class="t" style="left:1420px;top:723px;width:107px;text-align:center;font-size:12px;letter-spacing:-0.1px;color:#f00">-33.00</div>
<div class="t" style="left:14px;top:755px;width:263px;text-align:center;font-size:12px;letter-spacing:-0.1px;-webkit-text-stroke:0.25px #fff;color:#fff">总计</div>
<div class="t" style="left:279px;top:755px;width:199px;text-align:center;font-size:12px;letter-spacing:-0.1px;-webkit-text-stroke:0.25px #fff;color:#fff">7</div>
<div class="t" style="left:1177px;top:755px;width:108px;text-align:center;font-size:12px;letter-spacing:-0.1px;-webkit-text-stroke:0.25px #fff;color:#fff">210.00</div>
<div class="t" style="left:1287px;top:755px;width:131px;text-align:center;font-size:12px;letter-spacing:-0.1px;-webkit-text-stroke:0.25px #fff;color:#fff">210.00</div>
<div class="t" style="left:1420px;top:755px;width:107px;text-align:center;font-size:12px;letter-spacing:-0.1px;color:#f00">-33.00</div>
</body></html>
